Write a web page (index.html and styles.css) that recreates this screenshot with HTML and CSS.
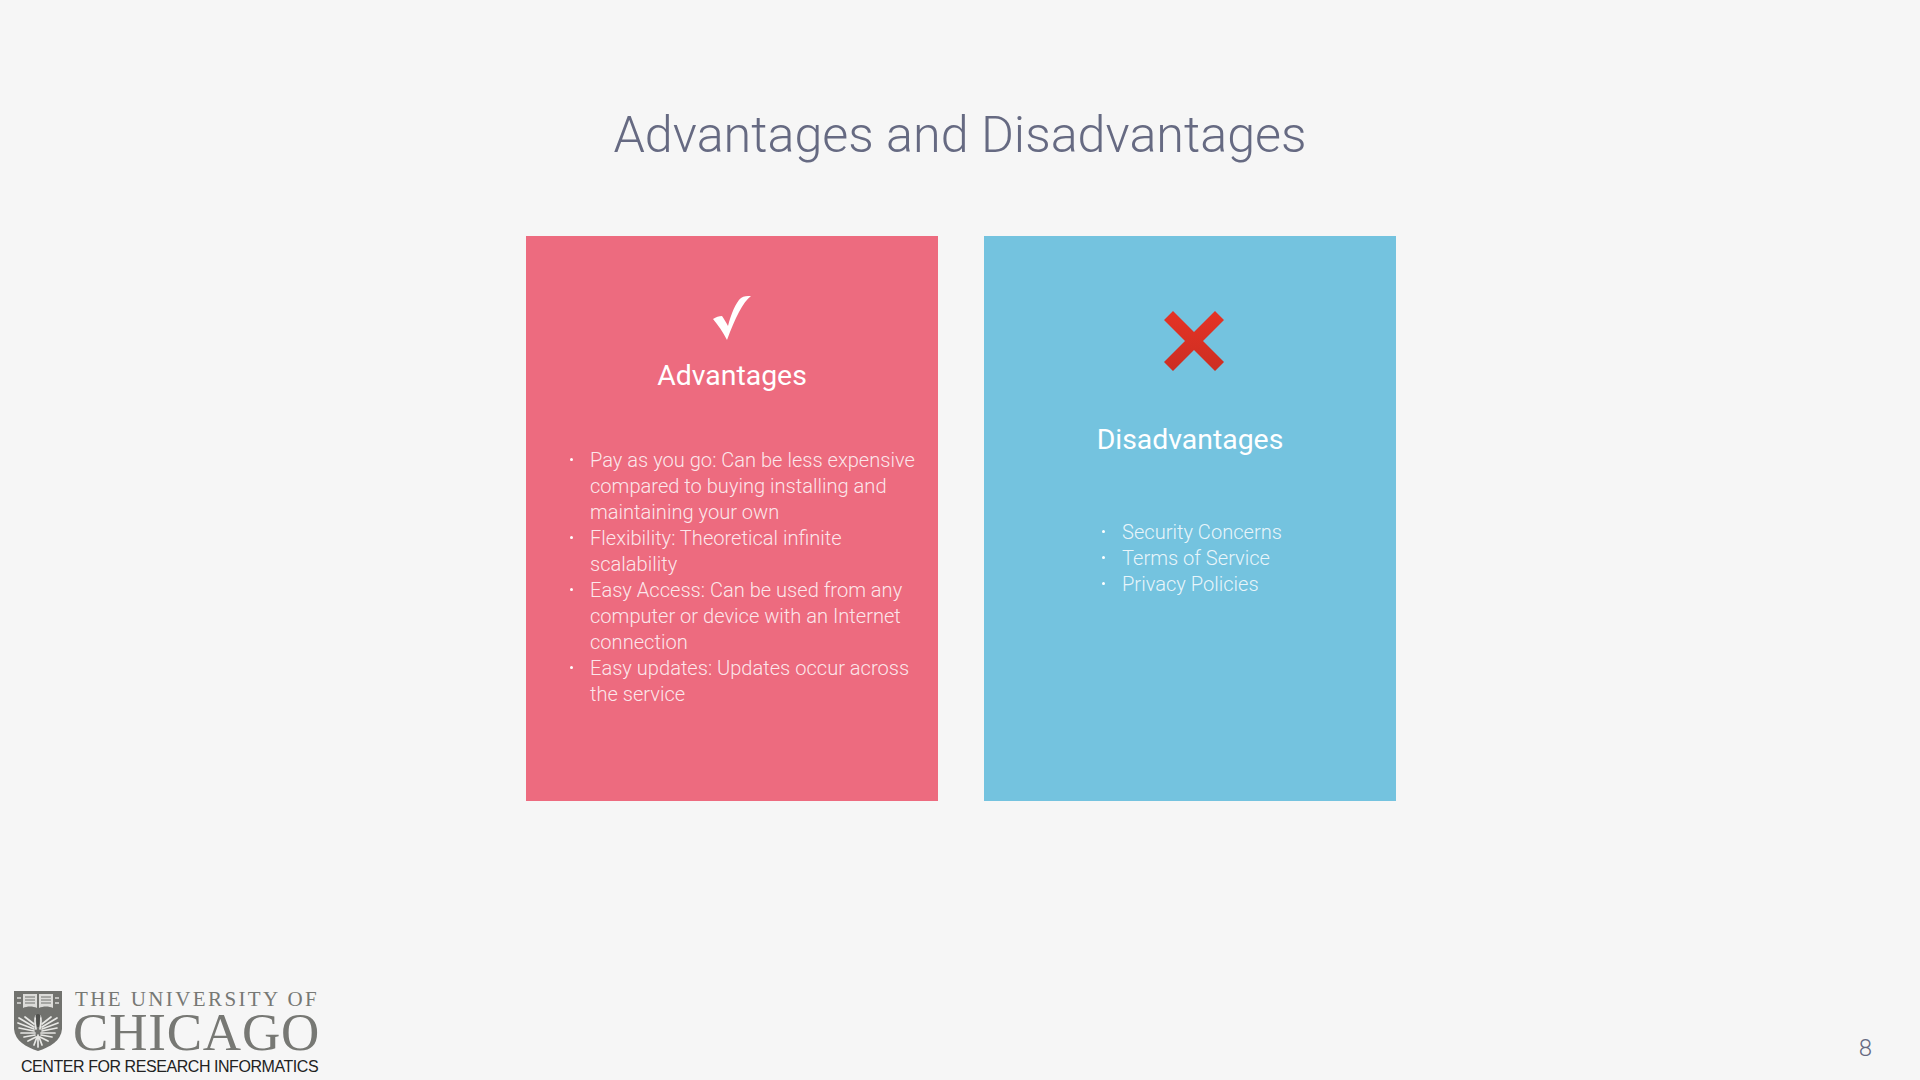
FILE: index.html
```html
<!DOCTYPE html>
<html lang="en">

<head>
    <meta charset="UTF-8">
    <title>Advantages and Disadvantages</title>
    <link rel="stylesheet" href="styles.css">
</head>

<body>
    <div class="slide">
        <h1 class="title">Advantages and Disadvantages</h1>
        <div class="cards">
            <div class="card card-pro">
                <svg class="icon-check" viewBox="0 0 38 44" width="38" height="44">
                    <path d="M0 23 C3 21 6 20 9 20 C11 23 13 26 15 30 C18 18 23 6 28 2 C31 0 34 0 38 0 C30 6 22 22 14 44 C10 36 5 29 0 23 Z" fill="#fff" />
                </svg>
                <h2 class="card-title">Advantages</h2>
                <ul class="points">
                    <li>Pay as you go: Can be less expensive compared to buying installing and maintaining your own</li>
                    <li>Flexibility: Theoretical infinite scalability</li>
                    <li>Easy Access: Can be used from any computer or device with an Internet connection</li>
                    <li>Easy updates: Updates occur across the service</li>
                </ul>
            </div>
            <div class="card card-con">
                <svg class="icon-cross" viewBox="0 0 60 60" width="60" height="60">
                    <defs>
                        <linearGradient id="crossfill" x1="0" y1="0" x2="0" y2="1">
                            <stop offset="0" stop-color="#e53325" />
                            <stop offset="1" stop-color="#cc2e22" />
                        </linearGradient>
                    </defs>
                    <path d="M9 0 L30 21 L51 0 L60 9 L39 30 L60 51 L51 60 L30 39 L9 60 L0 51 L21 30 L0 9 Z" fill="url(#crossfill)" />
                </svg>
                <h2 class="card-title">Disadvantages</h2>
                <ul class="points points-short">
                    <li>Security Concerns</li>
                    <li>Terms of Service</li>
                    <li>Privacy Policies</li>
                </ul>
            </div>
        </div>
        <div class="footer">
            <div class="logo">
                <div class="logo-top">
                    <svg class="shield" viewBox="0 0 48 60" width="48" height="60">
                        <path d="M0 0 H48 V38 C47 50 36 56 24 60 C12 56 1 50 0 38 Z" fill="#71726e" />
                        <path d="M9 3 H23 V17 C19 15 13 15 9 17 Z M25 3 H39 V17 C35 15 29 15 25 17 Z" fill="#dcdcd9" />
                        <path d="M11 6 H21 M11 9 H21 M11 12 H21 M27 6 H37 M27 9 H37 M27 12 H37" stroke="#71726e" stroke-width="1" />
                        <path d="M3 7 H7 M3 12 H7 M41 7 H45 M41 12 H45" stroke="#dcdcd9" stroke-width="1.5" />
                        <g stroke="#e8e8e5" stroke-width="1.7" stroke-linecap="round" fill="none">
                            <path d="M20 33 L11 26 M20 36 L5 27 M20 38 L4 32 M20 40 L5 37 M21 42 L7 42 M21 44 L10 46 M22 46 L14 50" />
                            <path d="M28 33 L37 26 M28 36 L43 27 M28 38 L44 32 M28 40 L43 37 M27 42 L41 42 M27 44 L38 46 M26 46 L34 50" />
                            <path d="M24 44 V56 M23 46 L20 54 M25 46 L28 54" />
                            <path d="M22 25 C20 28 21 33 22 38 M26 25 C28 28 27 33 26 38" />
                        </g>
                        <path d="M24 23 C26 23 27 25 26 27 L25 36 L23 36 L22 27 C21 25 22 23 24 23 Z" fill="#4f504d" />
                    </svg>
                    <div class="wordmark">
                        <div class="wordmark-small">THE UNIVERSITY OF</div>
                        <div class="wordmark-big">CHICAGO</div>
                    </div>
                </div>
                <div class="logo-sub">CENTER FOR RESEARCH INFORMATICS</div>
            </div>
            <div class="page-num">8</div>
        </div>
    </div>
</body>

</html>
```

FILE: styles.css
```css
html,
body {
    margin: 0;
    padding: 0;
}

body {
    background-color: #f6f6f6;
    font-family: "Roboto", sans-serif;
}

.slide {
    display: flex;
    flex-direction: column;
    height: 1080px;
    overflow: hidden;
}

.title {
    margin: 101px 0 0 0;
    height: 135px;
    font-size: 50.3px;
    line-height: 68px;
    font-weight: 300;
    color: #666a82;
    text-align: center;
}

.cards {
    display: flex;
    justify-content: center;
    gap: 46px;
    height: 565px;
}

.card {
    display: flex;
    flex-direction: column;
    box-sizing: border-box;
    width: 412px;
    color: #fff;
}

.card-pro {
    background-color: #ed6b7f;
    padding-top: 59px;
    margin-left: 2px;
}

.card-con {
    background-color: #74c3df;
    padding-top: 75px;
}

.icon-check {
    display: block;
    margin: 0 auto;
    transform: translateY(1px);
}

.icon-cross {
    display: block;
    margin: 0 0 0 180px;
}

.card-title {
    margin: 0;
    font-size: 28.4px;
    line-height: 36px;
    font-weight: 400;
    text-align: center;
}

.card-pro .card-title {
    margin-top: 19px;
}

.card-con .card-title {
    margin-top: 51px;
}

.points {
    list-style: none;
    margin: 53px 0 0 0;
    padding: 0 16px 0 64px;
    font-size: 20.08px;
    line-height: 26px;
    font-weight: 300;
    color: rgba(255, 255, 255, 0.85);
}

.points li {
    position: relative;
}

.points li::before {
    content: "";
    position: absolute;
    left: -20px;
    top: 11px;
    width: 3px;
    height: 3px;
    border-radius: 50%;
    background-color: #fff;
}

.points-short {
    margin-top: 61px;
    padding-left: 138px;
}

.footer {
    display: flex;
    justify-content: space-between;
    align-items: flex-end;
    margin-top: auto;
    padding: 0 48px 0 14px;
}

.logo {
    display: flex;
    flex-direction: column;
    width: 308px;
    margin-bottom: 3px;
}

.logo-top {
    display: flex;
    gap: 12px;
}

.shield {
    flex-shrink: 0;
    filter: blur(0.3px);
}

.wordmark {
    color: #777874;
    font-family: "Liberation Serif", serif;
}

.wordmark-small {
    font-size: 21px;
    line-height: 22px;
    letter-spacing: 2.4px;
    margin: -3px 0 0 1px;
    white-space: nowrap;
}

.wordmark-big {
    font-size: 53px;
    line-height: 40px;
    margin-top: 2px;
    letter-spacing: 0.8px;
    margin-left: -1px;
    white-space: nowrap;
}

.logo-sub {
    margin: 5px 0 0 7px;
    font-family: "Liberation Sans", sans-serif;
    font-size: 16px;
    line-height: 20px;
    letter-spacing: -0.44px;
    color: #222;
    white-space: nowrap;
}

.page-num {
    font-size: 24px;
    line-height: 28px;
    font-weight: 300;
    color: #666a82;
    margin-bottom: 18px;
}
```
